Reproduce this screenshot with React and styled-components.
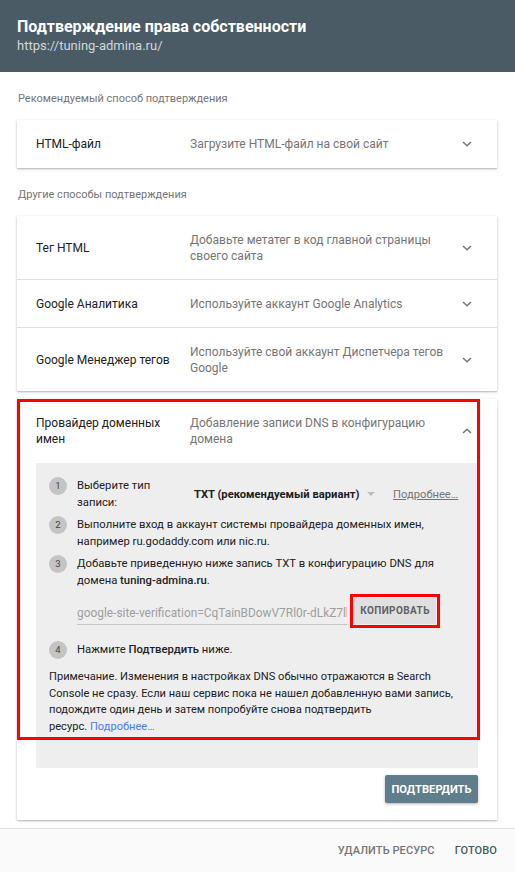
import React from "react";
import styled, { createGlobalStyle } from "styled-components";

const GlobalStyle = createGlobalStyle`
  body {
    margin: 0;
    background: #fff;
    font-family: Roboto, "Noto Sans", Arial, sans-serif;
    color: #212121;
  }
  * { box-sizing: border-box; }
`;

const Chevron = ({ up }) => (
  <svg width="10" height="6" viewBox="0 0 10 6">
    <polyline
      points={up ? "1,5 5,1.2 9,5" : "1,1 5,4.8 9,1"}
      fill="none"
      stroke="#757575"
      strokeWidth="1.5"
    />
  </svg>
);

const methods = [
  { title: "Тег HTML", desc: "Добавьте метатег в код главной страницы своего сайта" },
  { title: "Google Аналитика", desc: "Используйте аккаунт Google Analytics" },
  { title: "Google Менеджер тегов", desc: "Используйте свой аккаунт Диспетчера тегов Google" },
];

const App = () => {
  return (
    <>
      <GlobalStyle />
      <Header>
        <Title>Подтверждение права собственности</Title>
        <SiteUrl>https://tuning-admina.ru/</SiteUrl>
      </Header>
      <Main>
        <SectionLabel>Рекомендуемый способ подтверждения</SectionLabel>
        <Card>
          <Row>
            <RowTitle>HTML-файл</RowTitle>
            <RowDesc>Загрузите HTML-файл на свой сайт</RowDesc>
            <ChevronBox><Chevron /></ChevronBox>
          </Row>
        </Card>

        <SectionLabel>Другие способы подтверждения</SectionLabel>
        <Card>
          {methods.map((m) => (
            <Row key={m.title}>
              <RowTitle>{m.title}</RowTitle>
              <RowDesc>{m.desc}</RowDesc>
              <ChevronBox><Chevron /></ChevronBox>
            </Row>
          ))}
        </Card>

        <ExpandedCard>
          <Highlight />
          <Row expanded>
            <RowTitle>Провайдер доменных имен</RowTitle>
            <RowDesc>Добавление записи DNS в конфигурацию домена</RowDesc>
            <ChevronBox><Chevron up /></ChevronBox>
          </Row>
          <Panel>
            <Step>
              <StepNum>1</StepNum>
              <StepLabel>Выберите тип записи:</StepLabel>
              <Select>
                TXT (рекомендуемый вариант)
                <Caret />
              </Select>
              <MoreLink>Подробнее…</MoreLink>
            </Step>
            <Step>
              <StepNum>2</StepNum>
              <StepText>
                Выполните вход в аккаунт системы провайдера доменных имен,
                например ru.godaddy.com или nic.ru.
              </StepText>
            </Step>
            <Step>
              <StepNum>3</StepNum>
              <StepText>
                Добавьте приведенную ниже запись TXT в конфигурацию DNS для
                домена <Strong>tuning-admina.ru</Strong>.
              </StepText>
            </Step>
            <CodeRow>
              <CodeField>google-site-verification=CqTainBDowV7Rl0r-dLkZ7lhJx2K9</CodeField>
              <CopyButton>КОПИРОВАТЬ</CopyButton>
            </CodeRow>
            <Step>
              <StepNum>4</StepNum>
              <StepText>
                Нажмите <Strong>Подтвердить</Strong> ниже.
              </StepText>
            </Step>
            <Note>
              Примечание. Изменения в настройках DNS обычно отражаются в Search
              Console не сразу. Если наш сервис пока не нашел добавленную вами
              запись, подождите один день и затем попробуйте снова подтвердить{" "}
              <NoWrap>
                ресурс. <BlueLink>Подробнее…</BlueLink>
              </NoWrap>
            </Note>
          </Panel>
          <Actions>
            <PrimaryButton>ПОДТВЕРДИТЬ</PrimaryButton>
          </Actions>
        </ExpandedCard>
      </Main>
      <Footer>
        <TextButton>УДАЛИТЬ РЕСУРС</TextButton>
        <TextButton strong>ГОТОВО</TextButton>
      </Footer>
    </>
  );
};

const Header = styled.header`
  height: 72px;
  background: #4a5b65;
  padding: 17px 17px 0;
`;

const Title = styled.div`
  color: #fff;
  font-size: 16px;
  font-weight: 700;
  line-height: 19px;
`;

const SiteUrl = styled.div`
  color: #cfd8dc;
  font-size: 13px;
  line-height: 16px;
  margin-top: 2px;
`;

const Main = styled.main`
  padding: 0 18px 0 17px;
`;

const SectionLabel = styled.div`
  font-size: 11px;
  color: #757575;
  line-height: 16px;
  margin: 19px 1px 13px;
`;

const Card = styled.div`
  background: #fff;
  box-shadow: 0 1px 3px rgba(0, 0, 0, 0.2), 0 1px 1px rgba(0, 0, 0, 0.12);
`;

const ExpandedCard = styled(Card)`
  position: relative;
  margin-top: 8px;
  padding-bottom: 17px;
`;

const Highlight = styled.div`
  position: absolute;
  left: 0;
  top: 0;
  width: 463px;
  height: 341px;
  border: 3px solid #ff0000;
  pointer-events: none;
  z-index: 2;
`;

const Row = styled.div`
  display: flex;
  align-items: center;
  min-height: 48px;
  padding: ${(p) => (p.expanded ? "15.5px 12px 16.5px 19px" : "15.5px 12px")};
  padding-left: 19px;
  font-size: 12px;
  line-height: 16px;
  & + & {
    border-top: 1px solid #e0e0e0;
  }
`;

const RowTitle = styled.div`
  width: 154px;
  flex-shrink: 0;
  padding-right: 12px;
  color: #212121;
`;

const RowDesc = styled.div`
  flex: 1;
  color: #757575;
`;

const ChevronBox = styled.div`
  width: 36px;
  display: flex;
  justify-content: center;
  align-items: center;
`;

const Panel = styled.div`
  margin: 0 19px;
  background: #eeeeee;
  padding: 14px 13px 33px;
  font-size: 11.3px;
  line-height: 17px;
  color: #212121;
`;

const Step = styled.div`
  display: flex;
  align-items: flex-start;
  & + & {
    margin-top: 5px;
  }
`;

const StepNum = styled.div`
  width: 18px;
  height: 18px;
  border-radius: 50%;
  background: #c4c4c4;
  color: #424242;
  font-size: 9.5px;
  line-height: 18px;
  text-align: center;
  flex-shrink: 0;
  margin-right: 10px;
`;

const StepLabel = styled.div`
  width: 105px;
  flex-shrink: 0;
`;

const StepText = styled.div`
  flex: 1;
`;

const Select = styled.div`
  display: flex;
  align-items: center;
  align-self: center;
  margin-left: 12px;
  font-weight: 700;
  font-size: 11.2px;
  color: #212121;
  white-space: nowrap;
  width: 199px;
  flex-shrink: 0;
`;

const Caret = styled.span`
  display: inline-block;
  margin-left: 8px;
  width: 0;
  height: 0;
  border-left: 4px solid transparent;
  border-right: 4px solid transparent;
  border-top: 4px solid #bdbdbd;
`;

const MoreLink = styled.span`
  align-self: center;
  font-size: 11.2px;
  color: #757575;
  text-decoration: underline;
  white-space: nowrap;
`;

const Strong = styled.span`
  font-weight: 500;
`;

const CodeRow = styled.div`
  display: flex;
  align-items: center;
  margin: 5px 0 16px 28px;
`;

const CodeField = styled.div`
  width: 270px;
  overflow: hidden;
  white-space: nowrap;
  color: #9e9e9e;
  font-size: 11.9px;
  line-height: 22px;
  padding-top: 8px;
  border-bottom: 1px solid #c6c6c6;
  margin-right: 7px;
`;

const CopyButton = styled.button`
  width: 82px;
  height: 26px;
  border: none;
  background: #e0e0e0;
  color: #616161;
  font-family: inherit;
  font-size: 10px;
  font-weight: 700;
  letter-spacing: 0.4px;
  outline: 3px solid #ff0000;
  outline-offset: 1px;
  padding: 0;
  margin-top: 2px;
`;

const Note = styled.p`
  margin: 10px 0 0;
  font-size: 11.1px;
  line-height: 16.5px;
  color: #212121;
`;

const NoWrap = styled.span`
  white-space: nowrap;
`;

const BlueLink = styled.span`
  color: #4a7cf0;
`;

const Actions = styled.div`
  display: flex;
  justify-content: flex-end;
  padding: 7px 19px 0;
`;

const PrimaryButton = styled.button`
  width: 93px;
  height: 28px;
  border: none;
  border-radius: 2px;
  background: #607d8b;
  color: #fff;
  font-family: inherit;
  font-size: 11.2px;
  font-weight: 700;
  padding: 0;
  box-shadow: 0 1px 3px rgba(0, 0, 0, 0.3);
`;

const Footer = styled.footer`
  margin-top: 8px;
  border-top: 1px solid #e0e0e0;
  background: #fafafa;
  display: flex;
  justify-content: flex-end;
  align-items: center;
  gap: 20px;
  padding: 14px 18px 16px;
`;

const TextButton = styled.span`
  font-size: 11px;
  font-weight: 500;
  line-height: 16px;
  color: ${(p) => (p.strong ? "#455a64" : "#757575")};
  letter-spacing: 0.1px;
`;

export default App;
